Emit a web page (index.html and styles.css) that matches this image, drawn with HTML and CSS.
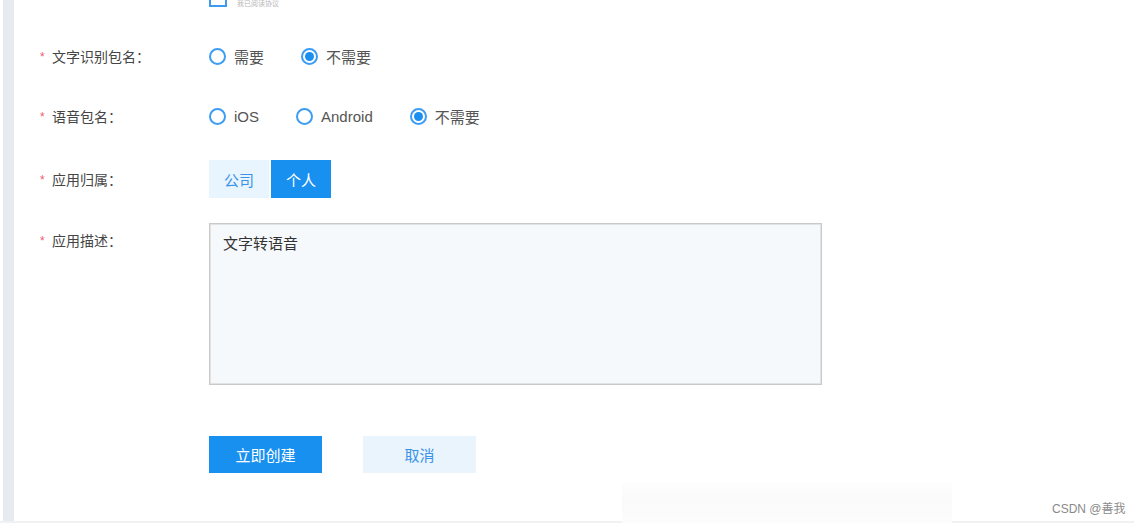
FILE: index.html
```html
<!DOCTYPE html>
<html lang="zh-CN">
<head>
<meta charset="utf-8">
<title>创建应用</title>
<link rel="stylesheet" href="styles.css">
</head>
<body>
<div class="page">
  <aside class="rail"></aside>
  <main class="form">
    <div class="row row-top">
      <div class="label"></div>
      <div class="control">
        <span class="checkbox"></span>
        <span class="agree">我已阅读协议</span>
      </div>
    </div>

    <div class="row">
      <div class="label"><span class="req">*</span>文字识别包名：</div>
      <div class="control radios">
        <label class="radio"><span class="dot"></span>需要</label>
        <label class="radio checked"><span class="dot"></span>不需要</label>
      </div>
    </div>

    <div class="row row-2">
      <div class="label"><span class="req">*</span>语音包名：</div>
      <div class="control radios">
        <label class="radio"><span class="dot"></span>iOS</label>
        <label class="radio"><span class="dot"></span>Android</label>
        <label class="radio checked"><span class="dot"></span>不需要</label>
      </div>
    </div>

    <div class="row row-3">
      <div class="label"><span class="req">*</span>应用归属：</div>
      <div class="control seg">
        <span class="seg-btn">公司</span>
        <span class="seg-btn active">个人</span>
      </div>
    </div>

    <div class="row row-desc">
      <div class="label"><span class="req">*</span>应用描述：</div>
      <div class="control">
        <div class="textarea">文字转语音</div>
      </div>
    </div>

    <div class="row actions">
      <div class="label"></div>
      <div class="control btns">
        <span class="btn primary">立即创建</span>
        <span class="btn ghost">取消</span>
      </div>
    </div>
  </main>
</div>
<div class="smudge"></div>
<div class="watermark">CSDN @善我</div>
</body>
</html>
```

FILE: styles.css
```css
html, body {
  margin: 0;
  padding: 0;
  background: #ffffff;
  overflow: hidden;
}
body {
  width: 1134px;
  height: 523px;
  position: relative;
  font-family: "Liberation Sans", "Noto Sans CJK SC", sans-serif;
  color: #444;
}
.page {
  display: flex;
  height: 521px;
  border-bottom: 2px solid #f0f1f3;
  overflow: hidden;
}
.rail {
  width: 11px;
  margin-left: 3px;
  background: #e7eaf0;
  flex: none;
}
.form {
  flex: 1;
  padding-left: 26px;
  display: flex;
  flex-direction: column;
}
.row {
  display: flex;
  align-items: center;
  height: 38px;
  margin-bottom: 22px;
}
.row-top {
  height: 17px;
  margin-top: -10px;
  margin-bottom: 30px;
  align-items: stretch;
}
.row-top .control {
  align-items: stretch;
}
.row-2 { margin-bottom: 25px; }
.row-3 { margin-bottom: 25px; }
.label {
  width: 169px;
  flex: none;
  font-size: 14px;
  color: #454545;
  display: flex;
  align-items: center;
}
.req {
  color: #f25c6a;
  font-size: 12px;
  width: 12px;
  position: relative;
  top: 1px;
}
.control {
  display: flex;
  align-items: center;
}
.checkbox {
  width: 14px;
  height: 13px;
  border: 2px solid #3d9bef;
  background: #fff;
}
.agree {
  margin-left: 10px;
  font-size: 7px;
  line-height: 7px;
  height: 7px;
  align-self: flex-end;
  color: #b8b8b8;
}
.radios { gap: 37px; }
.radio {
  display: flex;
  align-items: center;
  font-size: 15px;
  color: #555;
}
.dot {
  width: 13px;
  height: 13px;
  border: 2px solid #3d9df2;
  border-radius: 50%;
  margin-right: 8px;
  display: flex;
  align-items: center;
  justify-content: center;
  background: #fff;
}
.checked .dot::after {
  content: "";
  width: 9px;
  height: 9px;
  border-radius: 50%;
  background: #1a8ff0;
}
.seg { gap: 2px; }
.seg-btn {
  width: 60px;
  height: 38px;
  display: flex;
  align-items: center;
  justify-content: center;
  font-size: 15px;
  background: #e8f4fe;
  color: #3b93e8;
}
.seg-btn.active {
  background: #1890f0;
  color: #fff;
}
.row-desc {
  align-items: flex-start;
  height: auto;
  margin-bottom: 50px;
}
.row-desc .label {
  height: 34px;
}
.textarea {
  width: 585px;
  height: 136px;
  border: 1px solid #c9c9c9;
  box-shadow: inset 0 0 0 1px #e2e2e2;
  background: #f6f9fc;
  padding: 11px 13px 13px 13px;
  font-size: 15px;
  color: #333;
  line-height: 18px;
}
.btns { gap: 41px; }
.btn {
  width: 113px;
  height: 37px;
  display: flex;
  align-items: center;
  justify-content: center;
  font-size: 15px;
}
.btn.primary {
  background: #1890f0;
  color: #fff;
}
.btn.ghost {
  background: #e9f4fd;
  color: #3b93e8;
}
.smudge {
  position: absolute;
  left: 622px;
  top: 483px;
  width: 330px;
  height: 40px;
  background: linear-gradient(180deg, #fdfdfd 0%, #fafafa 50%, #fcfcfc 100%);
}
.watermark {
  position: absolute;
  left: 1052px;
  top: 501px;
  font-size: 12px;
  line-height: 16px;
  color: #8a8a8a;
}
```
